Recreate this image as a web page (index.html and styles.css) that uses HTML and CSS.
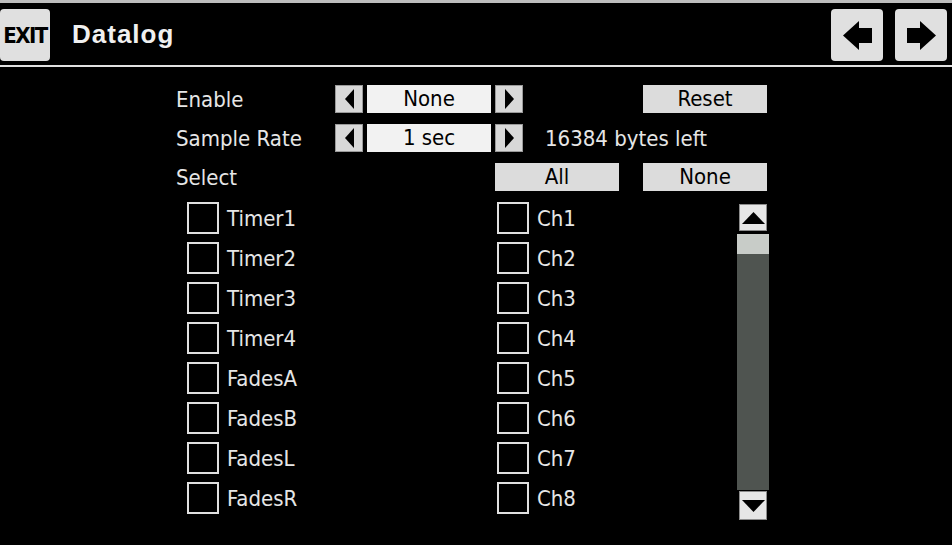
FILE: index.html
```html
<!DOCTYPE html>
<html lang="en">
<head>
    <meta charset="UTF-8">
    <meta name="viewport" content="width=device-width, initial-scale=1.0">
    <title>Datalog</title>
    <link rel="stylesheet" href="styles.css">
</head>
<body>

    <div class="top-strip"></div>

    <header class="titlebar">
        <button class="exit-btn">EXIT</button>
        <h1>Datalog</h1>
        <div class="nav">
            <button class="nav-btn" aria-label="Previous">
                <svg width="29" height="29" viewBox="0 0 29 29"><polygon points="0,14.5 16,0 16,7 29,7 29,22 16,22 16,29" fill="#000"/></svg>
            </button>
            <button class="nav-btn" aria-label="Next">
                <svg width="29" height="29" viewBox="0 0 29 29"><polygon points="29,14.5 13,0 13,7 0,7 0,22 13,22 13,29" fill="#000"/></svg>
            </button>
        </div>
    </header>

    <main class="panel">
        <div class="setting-row">
            <span class="label">Enable</span>
            <button class="spin-btn"><svg width="9" height="20" viewBox="0 0 9 20"><polygon points="0,10 9,0 9,20" fill="#000"/></svg></button>
            <span class="spin-value">None</span>
            <button class="spin-btn"><svg width="9" height="20" viewBox="0 0 9 20"><polygon points="9,10 0,0 0,20" fill="#000"/></svg></button>
            <button class="text-btn push-right">Reset</button>
        </div>
        <div class="setting-row">
            <span class="label">Sample Rate</span>
            <button class="spin-btn"><svg width="9" height="20" viewBox="0 0 9 20"><polygon points="0,10 9,0 9,20" fill="#000"/></svg></button>
            <span class="spin-value">1 sec</span>
            <button class="spin-btn"><svg width="9" height="20" viewBox="0 0 9 20"><polygon points="9,10 0,0 0,20" fill="#000"/></svg></button>
            <span class="bytes-left">16384 bytes left</span>
        </div>
        <div class="setting-row">
            <span class="label">Select</span>
            <button class="text-btn push-right">All</button>
            <button class="text-btn gap-left">None</button>
        </div>

        <div class="channels">
            <ul class="check-col">
                <li><span class="checkbox"></span>Timer1</li>
                <li><span class="checkbox"></span>Timer2</li>
                <li><span class="checkbox"></span>Timer3</li>
                <li><span class="checkbox"></span>Timer4</li>
                <li><span class="checkbox"></span>FadesA</li>
                <li><span class="checkbox"></span>FadesB</li>
                <li><span class="checkbox"></span>FadesL</li>
                <li><span class="checkbox"></span>FadesR</li>
            </ul>
            <ul class="check-col narrow">
                <li><span class="checkbox"></span>Ch1</li>
                <li><span class="checkbox"></span>Ch2</li>
                <li><span class="checkbox"></span>Ch3</li>
                <li><span class="checkbox"></span>Ch4</li>
                <li><span class="checkbox"></span>Ch5</li>
                <li><span class="checkbox"></span>Ch6</li>
                <li><span class="checkbox"></span>Ch7</li>
                <li><span class="checkbox"></span>Ch8</li>
            </ul>
            <div class="scrollbar">
                <button class="scroll-btn"><svg width="23" height="12" viewBox="0 0 23 12"><polygon points="11.5,0 23,12 0,12" fill="#000"/></svg></button>
                <div class="scroll-track">
                    <div class="scroll-thumb"></div>
                </div>
                <button class="scroll-btn down"><svg width="23" height="12" viewBox="0 0 23 12"><polygon points="0,0 23,0 11.5,12" fill="#000"/></svg></button>
            </div>
        </div>
    </main>

</body>
</html>
```

FILE: styles.css
```css
/* Datalog screen */
body {
    margin: 0;
    padding: 0;
    background-color: #000;
    color: #e6e6e6;
    font-family: "Liberation Sans Narrow", "DejaVu Sans Condensed", "Liberation Sans", sans-serif;
    font-size: 22px;
    width: 952px;
    height: 545px;
    overflow: hidden;
}
button {
    font-family: inherit;
    font-size: inherit;
    padding: 0;
    margin: 0;
    border: none;
    cursor: pointer;
}
.top-strip {
    height: 3px;
    background-color: #bdbdbd;
}
.titlebar {
    display: flex;
    align-items: center;
    height: 62px;
    border-bottom: 2px solid #e0e0e0;
}
.exit-btn {
    width: 50px;
    height: 52px;
    margin-top: 2px;
    background-color: #e0e0e0;
    color: #000;
    border-radius: 4px;
    font-weight: bold;
    font-size: 22px;
    letter-spacing: -1.5px;
}
.titlebar h1 {
    margin: 0 0 0 22px;
    font-family: "Liberation Sans", Arial, sans-serif;
    font-size: 26px;
    font-weight: bold;
    letter-spacing: 1px;
    color: #f0f0f0;
}
.nav {
    display: flex;
    gap: 12px;
    margin-left: auto;
    margin-right: 5px;
    margin-top: 2px;
}
.nav-btn {
    width: 52px;
    height: 52px;
    background-color: #e0e0e0;
    border-radius: 4px;
    display: flex;
    align-items: center;
    justify-content: center;
}
.panel {
    width: 593px;
    margin-left: 176px;
    padding-top: 18px;
}
.setting-row {
    display: flex;
    align-items: center;
    height: 28px;
    margin-bottom: 11px;
    width: 591px;
}
.setting-row + .setting-row {
    margin-top: 1px;
}
.label {
    width: 159px;
}
.spin-btn {
    width: 28px;
    height: 28px;
    background-color: #d8d8d8;
    border: 1px solid #9a9a9a;
    box-sizing: border-box;
    display: flex;
    align-items: center;
    justify-content: center;
}
.spin-value {
    width: 124px;
    height: 28px;
    margin: 0 4px 0 4px;
    background-color: #f2f2f2;
    color: #000;
    text-align: center;
    line-height: 28px;
}
.text-btn {
    width: 124px;
    height: 28px;
    background-color: #dcdcdc;
    color: #000;
    line-height: 28px;
}
.push-right {
    margin-left: auto;
}
.gap-left {
    margin-left: 24px;
}
.bytes-left {
    margin-left: 22px;
}
.channels {
    display: flex;
    margin-top: 11px;
}
.check-col {
    list-style: none;
    margin: 0 0 0 11px;
    padding: 0;
    width: 310px;
}
.check-col.narrow {
    margin-left: 0;
    width: 240px;
}
.check-col li {
    display: flex;
    align-items: center;
    height: 32px;
    margin-bottom: 8px;
}
.checkbox {
    width: 32px;
    height: 32px;
    border: 2px solid #e0e0e0;
    box-sizing: border-box;
    margin-right: 8px;
}
.scrollbar {
    display: flex;
    flex-direction: column;
    align-items: center;
    width: 32px;
    padding-top: 2px;
}
.scroll-btn {
    width: 28px;
    height: 27px;
    background-color: #e6e6e6;
    border: 1px solid #8c8c8c;
    box-sizing: border-box;
    display: flex;
    align-items: center;
    justify-content: center;
}
.scroll-btn.down {
    height: 29px;
    margin-top: 1px;
}
.scroll-track {
    width: 32px;
    height: 256px;
    margin-top: 3px;
    background-color: #4f5450;
}
.scroll-thumb {
    height: 20px;
    background-color: #c8ccc8;
}
```
